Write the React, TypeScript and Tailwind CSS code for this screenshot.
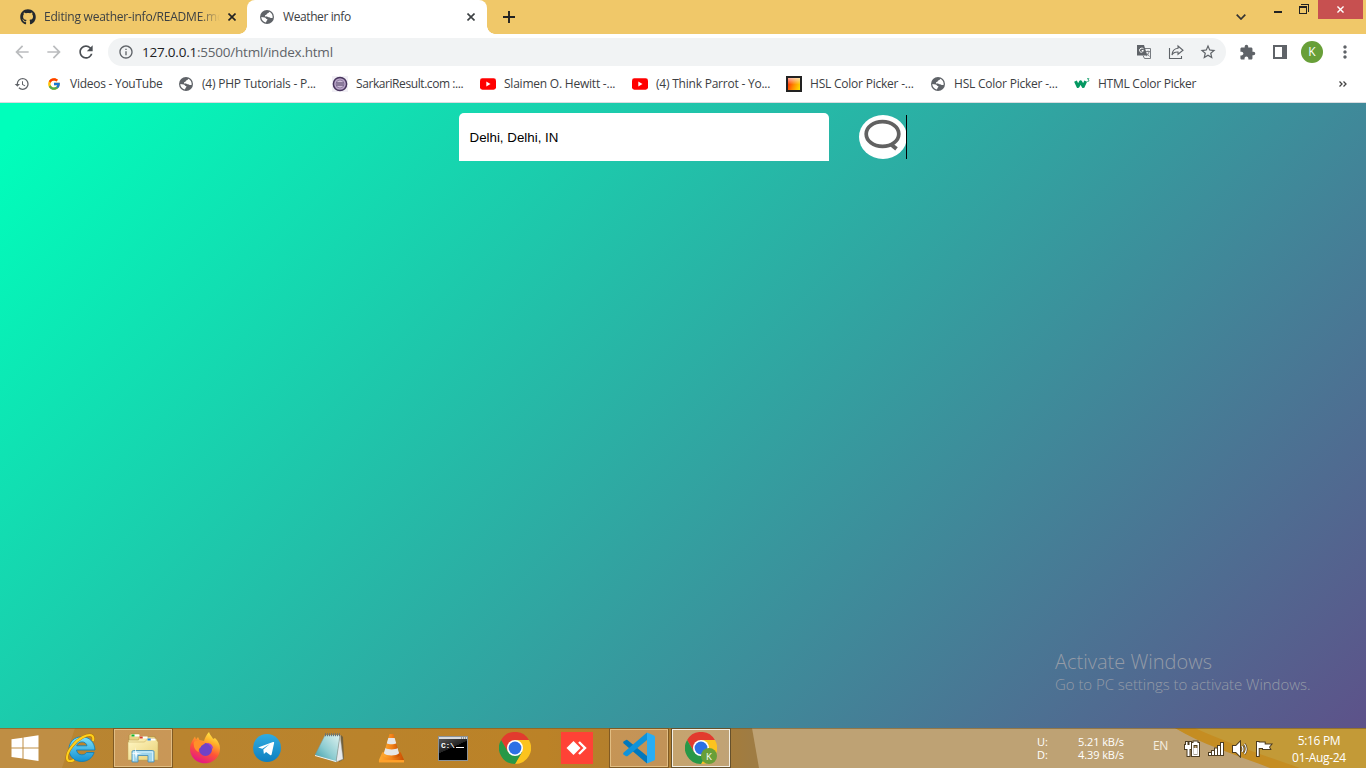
import type { ReactNode } from "react";
import { FaGithub } from "react-icons/fa";
import { FcGoogle } from "react-icons/fc";
import {
  MdArrowBack,
  MdArrowForward,
  MdExtension,
  MdHistory,
  MdInfoOutline,
  MdMoreVert,
  MdRefresh,
  MdStarBorder,
} from "react-icons/md";

function Cross({ className }: { className: string }) {
  return (
    <svg viewBox="0 0 8 8" className={className} fill="none" stroke="currentColor" strokeWidth="1.6">
      <path d="M0.5 0.5 7.5 7.5M7.5 0.5 0.5 7.5" />
    </svg>
  );
}

function Globe() {
  return (
    <svg viewBox="0 0 16 16" className="size-4 shrink-0">
      <circle cx="8" cy="8" r="7" fill="#5f6368" />
      <path
        d="M10.2 2.700C9.800 4.300 8 4 7.700 5.300c-.2 1-1.900.6-1.700 1.600.2.900 2.500.2 3.300 1 .7.8 1.900.4 2.400 1.200h1.900c.4-2.900-.9-5.300-3.400-6.400ZM2.300 8.100c1.200 0 2.200.2 3.400.4 1.200.2 1 1.300 2.100 1.500.9.200.8 1.100.1 1.500-.7.500-.4 1.500-1.100 2C4.200 12.900 2.300 10.800 2.300 8.100Z"
        fill="#fff"
      />
    </svg>
  );
}

function YouTube() {
  return (
    <svg viewBox="0 0 16 16" className="size-4 shrink-0">
      <rect y="2.300" width="16" height="11.400" rx="2.400" fill="#f00" />
      <path d="M6.300 5.600v4.800L10.500 8Z" fill="#fff" />
    </svg>
  );
}

function Seal() {
  return (
    <svg viewBox="0 0 16 16" className="size-4 shrink-0">
      <rect width="16" height="16" fill="#f1eff5" />
      <circle cx="8" cy="8" r="6.600" fill="#b9a5c8" stroke="#46345c" strokeWidth="1.500" />
      <circle cx="8" cy="8" r="4" fill="#cdbfd8" stroke="#7b6791" strokeWidth=".7" />
      <path d="M4.500 7h7M4.500 9h7" stroke="#46345c" strokeWidth="1" />
    </svg>
  );
}

function ColorSquare() {
  return (
    <span className="size-4 shrink-0 border-2 border-[#222] bg-[linear-gradient(180deg,rgba(255,255,255,.65),rgba(255,255,255,0)_55%),linear-gradient(110deg,#ff1a00,#ff8a00_50%,#ffe600)]" />
  );
}

function W3() {
  return (
    <svg viewBox="0 0 16 16" className="size-4 shrink-0" fill="none" stroke="#059862">
      <path d="m1.500 5.200 2.500 5.300L6.600 5.800l2.600 4.700L11.700 5.200" strokeWidth="3" strokeLinejoin="round" />
      <path d="M13 2.700h2l-1 1.200c1.500.2 1.200 2-.8 1.500" strokeWidth=".8" />
    </svg>
  );
}

function Bookmark({ icon, width, children }: { icon: ReactNode; width: string; children: ReactNode }) {
  return (
    <div className={`flex h-full shrink-0 items-center gap-2 ${width}`}>
      {icon}
      <span className="whitespace-nowrap text-[12px] text-[#3c4043]">{children}</span>
    </div>
  );
}

function TabStrip() {
  return (
    <header className="flex h-[34px] items-start bg-[#f0c869] text-[#3c4043]">
      <div className="flex h-[34px] w-[247px] shrink-0 items-center pl-5">
        <FaGithub className="size-4 shrink-0 text-[#24292e]" />
        <span className="ml-2 w-[176px] shrink-0 whitespace-nowrap text-[12px] tracking-[-0.220px] [mask-image:linear-gradient(90deg,#000_155px,transparent_176px)]">
          Editing weather-info/README.md
        </span>
        <Cross className="ml-2 size-2 shrink-0 text-[#222]" />
      </div>
      <div className="relative flex h-[34px] w-[240px] shrink-0 items-center rounded-t-lg bg-white pl-3">
        <span className="absolute bottom-0 -left-2 size-2 bg-[radial-gradient(circle_at_0_0,transparent_7.500px,#fff_8px)]" />
        <span className="absolute -right-2 bottom-0 size-2 bg-[radial-gradient(circle_at_100%_0,transparent_7.500px,#fff_8px)]" />
        <Globe />
        <span className="ml-2 w-[184px] shrink-0 text-[12px] tracking-[-0.400px]">Weather info</span>
        <Cross className="size-2 shrink-0 text-[#3c4043]" />
      </div>
      <svg viewBox="0 0 12 12" className="mt-[11px] ml-4 size-3 shrink-0" stroke="#222" strokeWidth="1.900">
        <path d="M6 0v12M0 6h12" />
      </svg>
      <svg viewBox="0 0 10 6" className="mt-[14px] ml-[721px] h-[6px] w-[10px] shrink-0" fill="none" stroke="#333" strokeWidth="1.700">
        <path d="m.7.700 4.300 4.300L9.300.700" />
      </svg>
      <span className="mt-[11px] ml-[28px] h-[2px] w-2 shrink-0 bg-[#222]" />
      <svg viewBox="0 0 10 10" className="mt-1 ml-[17px] size-[10px] shrink-0" fill="none" stroke="#222" shapeRendering="crispEdges">
        <path d="M.500 2.500h7v7h-7ZM.500 3.500h7M2 .500h7.500V8" />
      </svg>
      <div className="ml-[9px] flex h-[19px] w-[45px] shrink-0 items-center justify-center bg-[#c75050] text-white">
        <Cross className="size-[7px]" />
      </div>
    </header>
  );
}

function Toolbar() {
  return (
    <nav className="flex h-[36px] items-center bg-white text-[#5f6368]">
      <MdArrowBack className="ml-3 size-5 text-[#babcbe]" />
      <MdArrowForward className="ml-3 size-5 text-[#babcbe]" />
      <MdRefresh className="ml-3 size-5 text-[#4b4f54]" />
      <div className="ml-3 flex h-7 w-[1118px] items-center rounded-full bg-[#f1f3f4] pl-[10px]">
        <MdInfoOutline className="size-4" />
        <span className="ml-2 w-[990px] text-[13.500px] tracking-[-0.220px]">
          <span className="text-[#202124]">127.0.0.1</span>:5500/html/index.html
        </span>
        <svg viewBox="0 0 16 16" className="ml-[4px] size-4" fill="none">
          <path d="M5.500 4.500h9v10h-6l-1.500-3" stroke="#777b80" />
          <path d="M1 1h7l3.300 10.500H1Z" fill="#5f6368" />
          <path d="M7.500 4.800C6.300 3.500 3.500 4 3.500 6.300S6.800 9 7.300 6.500H5.700" stroke="#fff" />
          <path d="M10 7.500h4M12 6.500v1M13 8c-.4 2-1.500 3-3 4M10.500 9l3 3.500" stroke="#777b80" strokeWidth=".9" />
        </svg>
        <svg viewBox="0 0 16 16" className="ml-4 size-4" fill="none" stroke="#5f6368" strokeWidth="1.100">
          <path d="M1.500 4v10.500h12V12M10 2l5 4.300-5 4V8C7 7.800 5 9 4 11c.2-4 2.500-6.300 6-6.700Z" />
        </svg>
        <MdStarBorder className="ml-[15px] size-[18px]" />
      </div>
      <MdExtension className="ml-[13px] size-[17px]" />
      <span className="ml-[17px] h-[14px] w-[14px] border-2 border-r-[5px] border-[#5f6368]" />
      <span className="ml-[14px] flex size-[22px] items-center justify-center rounded-full bg-[#689f38] text-[12px] text-white">K</span>
      <MdMoreVert className="ml-3 size-5" />
    </nav>
  );
}

function Bookmarks() {
  return (
    <div className="flex h-[33px] items-center border-b border-[#dadce0] bg-white pb-[5px] pl-[14px]">
      <div className="w-8 shrink-0">
        <MdHistory className="size-4 text-[#5f6368]" />
      </div>
      <Bookmark width="w-[132px] tracking-[-0.260px]" icon={<FcGoogle className="mx-px size-[14px] shrink-0" />}>Videos - YouTube</Bookmark>
      <Bookmark width="w-[154px] tracking-[-0.220px]" icon={<Globe />}>(4) PHP Tutorials - P...</Bookmark>
      <Bookmark width="w-[148px] tracking-[-0.420px]" icon={<Seal />}>SarkariResult.com :...</Bookmark>
      <Bookmark width="w-[152px] tracking-[-0.220px]" icon={<YouTube />}>Slaimen O. Hewitt -...</Bookmark>
      <Bookmark width="w-[154px] tracking-[-0.220px]" icon={<YouTube />}>(4) Think Parrot - Yo...</Bookmark>
      <Bookmark width="w-[144px] tracking-[-0.220px]" icon={<ColorSquare />}>HSL Color Picker -...</Bookmark>
      <Bookmark width="w-[144px] tracking-[-0.220px]" icon={<Globe />}>HSL Color Picker -...</Bookmark>
      <Bookmark width="w-[265px] tracking-[-0.260px]" icon={<W3 />}>HTML Color Picker</Bookmark>
      <svg viewBox="0 0 8 6" className="h-[6px] w-2" fill="none" stroke="#444" strokeWidth="1.300">
        <path d="m.500.500 2.500 2.500L.500 5.500M4.500.500 7 3 4.500 5.500" />
      </svg>
    </div>
  );
}

function WeatherPage() {
  return (
    <main className="relative h-[625px] bg-[linear-gradient(135deg,#00ffbb_2%,#5e5089_101%)]">
      <div className="flex items-center pt-[10px] pl-[459px]">
        <div className="flex h-12 w-[370px] items-center rounded-t-[5px] bg-white px-[10.500px] pt-px font-['Liberation_Sans',sans-serif] text-[13.333px] text-black">
          Delhi, Delhi, IN
        </div>
        <button className="ml-[30px] flex h-11 w-12 border-0 p-0">
          <svg viewBox="0 0 48 44" className="h-11 w-12">
            <ellipse cx="24" cy="22" rx="24" ry="22" fill="#fff" />
            <ellipse cx="23.500" cy="19" rx="16.300" ry="12.300" fill="none" stroke="#616161" strokeWidth="3.700" />
            <path d="m32 29.500 5.500 4.300" stroke="#616161" strokeWidth="4" />
            <path d="M47.500 0v44" stroke="#000" />
          </svg>
        </button>
      </div>
      <div className="absolute top-[545px] left-[1055px] whitespace-nowrap text-[#949ba7]">
        <p className="text-[20px] leading-[27px] font-light">Activate Windows</p>
        <p className="text-[15px] leading-[18px] font-light tracking-[-0.050px]">Go to PC settings to activate Windows.</p>
      </div>
    </main>
  );
}

function WindowsLogo() {
  return (
    <svg viewBox="0 0 28 26" className="h-[26px] w-7" fill="#fff">
      <path d="M.500 4.300 11.500 2.700V12.500H.500ZM12.500 2.500 27.500.300V12.500h-15ZM.500 13.500h11v10L.500 22ZM12.500 13.500h15V26l-15-2.300Z" />
    </svg>
  );
}

function ExplorerE() {
  return (
    <svg viewBox="0 0 32 32" className="size-8">
      <defs>
        <linearGradient id="ie" x2="0" y2="1"><stop stopColor="#7ee2fb" /><stop offset="1" stopColor="#128fd1" /></linearGradient>
      </defs>
      <path d="M30 18H11.500c.3 3 2.500 4.800 5.300 4.800 2.200 0 3.700-.8 4.700-2.300h7.600C27.300 26 22.800 29.500 16.800 29.500 9 29.500 4 24.200 4 17.200 4 10 9.200 4.800 16.800 4.800S29.500 10 30 18ZM11.700 13.800H22c-.3-2.300-2.400-3.900-5-3.900-2.700 0-4.800 1.600-5.300 3.900Z" fill="url(#ie)" stroke="#087dba" strokeWidth=".8" />
      <path d="M28 9C29.500 2.500 25 1.500 18 5 10 9 2.500 18.500 2 25c-.3 4.500 2.800 5 7 3" fill="none" stroke="#b87900" strokeWidth="3" />
      <path d="M28 9C29.500 2.500 25 1.500 18 5 10 9 2.500 18.500 2 25c-.3 4.500 2.800 5 7 3" fill="none" stroke="#ffd11c" strokeWidth="2" />
    </svg>
  );
}

function Folder() {
  return (
    <svg viewBox="0 0 32 32" className="size-8">
      <defs>
        <linearGradient id="fo" x2="1" y2="1"><stop stopColor="#fff7c5" /><stop offset="1" stopColor="#e9cf72" /></linearGradient>
      </defs>
      <path d="M2 3.500 4 1.500h8l1 3h15v22H2Z" fill="#e9d382" stroke="#a9873b" strokeWidth=".6" />
      <path d="M4.500 2.500h8v2h-8Z" fill="#fff" /><path d="M4.500 2.500h3v2h-3Z" fill="#10b72d" />
      <path d="M1.500 8h10l1-3.500h8l1 2.500H30v21H1.500Z" fill="url(#fo)" stroke="#b99a4c" strokeWidth=".6" />
      <path d="M12.500 4.500h8v2h-8Z" fill="#fff" /><path d="M12.500 4.500h3.200v2h-3.200Z" fill="#d6402a" />
      <path d="m17.500 10 3-3h8L31 10v18H1V10Z" fill="url(#fo)" stroke="#c2a554" strokeWidth=".5" />
      <path d="M20.500 6.500h8v2h-8Z" fill="#fff" /><path d="M20.500 6.500h3.200v2h-3.200Z" fill="#2186de" />
      <path d="M5 30V20c0-1 .5-1.500 1.500-1.500h19c1 0 1.500.5 1.500 1.500v10h-6v-6.500H11V30Z" fill="#9ed5ed" stroke="#4c91b8" strokeWidth=".9" />
      <path d="M6.300 29v-9h19.400v9" fill="none" stroke="#d9f5ff" />
      <path d="m8.500 15 .8 5 .8 1 5 .5-5 .7-1 5-1-5-4-.7 4-.5Z" fill="#fff" opacity=".9" />
    </svg>
  );
}

function Firefox() {
  return (
    <svg viewBox="0 0 32 32" className="size-8">
      <defs>
        <linearGradient id="ff" x1=".8" y1="0" x2=".35" y2="1"><stop stopColor="#fff44f" /><stop offset=".3" stopColor="#ffb12a" /><stop offset=".6" stopColor="#ff5634" /><stop offset="1" stopColor="#e31587" /></linearGradient>
      </defs>
      <path d="M20 0c.5 2.500 3 4.500 4.200 7L26 6c3.200 3 5 6.500 5 10.500 0 8.500-6.700 14.800-15 14.800S1 25 1 17c0-4 1.300-7 3.300-10L6 4.500l1 3 2-2.500 1.500 3L15 9c1-3.500 2.500-6.500 5-9Z" fill="url(#ff)" />
      <circle cx="16.500" cy="17.500" r="6.500" fill="#7042c7" />
      <path d="M5 10c3-2 6-1 7 0l4 1c-1 2-4 2-4 4-2 1-3 3-2 5-4-1-6-6-5-10Z" fill="#ff9029" />
      <path d="M18 11c3 0 6 2 6 6l-3-3Z" fill="#a23dd1" />
    </svg>
  );
}

function Telegram() {
  return (
    <svg viewBox="0 0 28 28" className="size-7">
      <defs><linearGradient id="tg" x2="0" y2="1"><stop stopColor="#31ace1" /><stop offset="1" stopColor="#0e7fc0" /></linearGradient></defs>
      <circle cx="14" cy="14" r="14" fill="url(#tg)" />
      <path d="M5 13.500 20 8c.8-.3 1.300.2 1.100 1l-2.500 11.500c-.2.8-.8 1-1.500.500l-4-3-2.200 2-.6-4.500 6.500-5.500-7.500 4.800-4-1.300Z" fill="#fff" />
    </svg>
  );
}

function Notepad() {
  return (
    <svg viewBox="0 0 32 32" className="size-8">
      <defs><linearGradient id="np" x1="1" x2="0" y2="1"><stop stopColor="#dff2f0" /><stop offset=".55" stopColor="#8dccd1" /><stop offset="1" stopColor="#3598a5" /></linearGradient></defs>
      <path d="m28 3 2 2 1 22-5 3Z" fill="#72613e" />
      <path d="m27 3 3 24-7 3Z" fill="#e7eaed" stroke="#a9adad" strokeWidth=".5" />
      <path d="M12 3h15l-4 27-21-7Z" fill="url(#np)" stroke="#778f91" strokeWidth=".5" />
      <path d="m2 23 21 6v1L2 24Z" fill="#f4f5f2" />
      <path d="M12 2.800h16" stroke="#6a7373" strokeWidth="3" strokeDasharray="1 1" />
    </svg>
  );
}

function Vlc() {
  return (
    <svg viewBox="2 0 28 31" className="h-[30px] w-[27px]">
      <defs><linearGradient id="vl"><stop stopColor="#ffac31" /><stop offset=".5" stopColor="#f48419" /><stop offset="1" stopColor="#c94e00" /></linearGradient></defs>
      <path d="M6.500 20h19L29 28v2H3v-2Z" fill="url(#vl)" />
      <path d="M3 28h26v2.500H3Z" fill="#ffa12b" />
      <path d="m14 1h4l6.500 22c-1 4-16 4-17 0Z" fill="url(#vl)" />
      <path d="m12.700 5h6.600l1.600 5.500c-2 1.500-8 1.500-9.800 0ZM9.700 15.500c3 2 10 2 12.600 0l1.600 5.500c-3 3-13 3-15.800 0Z" fill="#e6e6e6" />
    </svg>
  );
}

function Terminal() {
  return (
    <svg viewBox="0 0 30 25" className="h-[25px] w-[30px]">
      <defs>
        <linearGradient id="cm" x2=".6" y2="1"><stop stopColor="#555" /><stop offset=".5" stopColor="#222" /><stop offset=".51" stopColor="#000" /></linearGradient>
      </defs>
      <rect width="30" height="25" fill="#8b9298" />
      <rect x="1" y="1" width="28" height="2" fill="#d7dadd" />
      <path d="M23 1.500h1v1h-1Zm2 0h1v1h-1Zm2 0h1v1h-1Z" fill="#555" />
      <rect x="1" y="3" width="28" height="21" fill="url(#cm)" />
      <text x="3" y="12" fill="#fff" className="font-['Liberation_Mono',monospace] text-[8px] font-bold tracking-[-0.300px]">C:\</text>
      <path d="M18 11.500h8" stroke="#fff" />
    </svg>
  );
}

function Chrome({ badge = false }: { badge?: boolean }) {
  return (
    <svg viewBox="0 0 32 32" className="size-8">
      <path d="M2.100 8A16 16 0 0 1 29.900 8H16L9 20Z" fill="#e23b2e" />
      <path d="M29.900 8A16 16 0 0 1 16 32L23 20 16 8Z" fill="#fcc31e" />
      <path d="M16 32A16 16 0 0 1 2.100 8L9 20l14 0Z" fill="#279847" />
      <circle cx="16" cy="16" r="8" fill="#fff" />
      <circle cx="16" cy="16" r="6.400" fill="#2c70e5" />
      {badge && (
        <g>
          <circle cx="24" cy="24" r="8" fill="#689f38" />
          <text x="24" y="27.500" textAnchor="middle" fontSize="9.500" fill="#fff">K</text>
        </g>
      )}
    </svg>
  );
}

function AnyDesk() {
  return (
    <svg viewBox="0 0 32 32" className="size-8">
      <path d="M0 0h32v32H0Z" fill="#ff4236" />
      <path d="m5.500 16 7-7 7 7-7 7Z" fill="#fff" />
      <path d="m18 10 6 6-6 6" fill="none" stroke="#fff" strokeWidth="2.400" />
    </svg>
  );
}

function VsCode() {
  return (
    <svg viewBox="0 0 32 32" className="size-8">
      <path d="M.500 9.500 3 8q1-.4 2 .4L24 24v7.500L.700 11.500q-.9-1-.2-2Z" fill="#0078bd" />
      <path d="M.500 22.500 3 24.200q1 .4 2-.4L24 8V.500L.700 20.500q-.9 1-.2 2Z" fill="#0e93db" />
      <path d="M24 .500 31 3.500q1 .5 1 1.500v22q0 1-1 1.500l-7 3Z" fill="#29adf3" />
    </svg>
  );
}

function TaskItem({ children, state = "idle" }: { children: ReactNode; state?: "idle" | "open" | "active" }) {
  const frame =
    state === "active"
      ? "border-[#f4f0e5] bg-white/30 outline outline-[#66512c]"
      : state === "open"
        ? "border-[#e1bd83] bg-[#e2b493]/40 outline outline-[#805a23]"
        : "border-transparent";
  return (
    <div className="flex h-10 w-[62px] shrink-0 items-center justify-center">
      <div className={`flex h-[38px] w-[58px] items-center justify-center border ${frame}`}>{children}</div>
    </div>
  );
}

function TrayIcons() {
  return (
    <svg viewBox="0 0 90 18" className="mt-[2px] ml-px h-[18px] w-[90px] shrink-0" fill="#fff" stroke="#4b3b20" strokeWidth="2" paintOrder="stroke">
      <path d="M2 2h1.500v3h2V2H7v3h1v4H5.500v7h-2V9H1V5h1Z" />
      <path fillRule="evenodd" d="M8 3h1.500V1.500h4V3H15v13H8ZM9.500 5v9.500h4V5Z" />
      <path stroke="none" d="M9.500 8h4v6h-4Z" />
      <path d="M25 13h2v2h-2ZM28 11h2v4h-2ZM31 8.500h2V15h-2ZM34 6h2v9h-2ZM37 3h2v12h-2Z" />
      <path d="M49 6h3l4-4v14l-4-4h-3Z" />
      <path d="M58 6q2 3 0 6M60.500 4q3.500 5 0 10" fill="none" strokeWidth="2.500" />
      <path d="M58 6q2 3 0 6M60.500 4q3.500 5 0 10" fill="none" stroke="#fff" strokeWidth="1.200" />
      <path d="M73 2h1.700v14H73ZM74.700 2.500h6v2H87l-2 2.500 1 2h-7V8h-4.300Z" />
    </svg>
  );
}

function Taskbar() {
  return (
    <footer className="relative h-10 overflow-hidden bg-[linear-gradient(90deg,#b88533_0%,#bb8227_40%,#a97c35_52%,#9f7c43_55%)]">
      <svg viewBox="0 0 1366 40" className="absolute inset-0 h-10 w-full">
        <path d="M0 0h75L62 40H0Z" fill="#c59855" opacity=".5" />
        <path d="M752 0h614v40H759Z" fill="#bea274" />
        <path d="M1175 0h191v40h-80C1250 30 1210 18 1175 0Z" fill="#c39a37" />
        <path d="M1175 0h20c30 14 70 28 105 40h-30C1240 28 1205 18 1175 0Z" fill="#c58d22" />
        <path d="M0 .500h1366" stroke="#6f5525" opacity=".55" />
      </svg>
      <div className="relative flex h-10 items-center">
        <div className="flex w-[50px] shrink-0 justify-center pb-px"><WindowsLogo /></div>
        <TaskItem><ExplorerE /></TaskItem>
        <TaskItem state="open"><Folder /></TaskItem>
        <TaskItem><Firefox /></TaskItem>
        <TaskItem><Telegram /></TaskItem>
        <TaskItem><Notepad /></TaskItem>
        <TaskItem><Vlc /></TaskItem>
        <TaskItem><Terminal /></TaskItem>
        <TaskItem><Chrome /></TaskItem>
        <TaskItem><AnyDesk /></TaskItem>
        <TaskItem state="open"><VsCode /></TaskItem>
        <TaskItem state="active"><Chrome badge /></TaskItem>
        <div className="ml-[305px] flex w-[87px] shrink-0 justify-between text-[11px] leading-[13px] tracking-[-0.080px] text-white">
          <div>U:<br />D:</div>
          <div className="text-right">5.21 kB/s<br />4.39 kB/s</div>
        </div>
        <span className="ml-[29px] w-[30px] shrink-0 pb-1 text-[12px] tracking-[-0.300px] text-[#f5eee0]">EN</span>
        <TrayIcons />
        <div className="ml-[10px] w-[70px] shrink-0 pt-[2px] text-center text-[12px] leading-[17px] tracking-[-0.320px] text-white">
          5:16 PM<br />01-Aug-24
        </div>
      </div>
    </footer>
  );
}

export default function App() {
  return (
    <div className="h-[768px] w-[1366px] overflow-hidden font-['Open_Sans','Noto_Sans',sans-serif]">
      <TabStrip />
      <Toolbar />
      <Bookmarks />
      <WeatherPage />
      <Taskbar />
    </div>
  );
}
